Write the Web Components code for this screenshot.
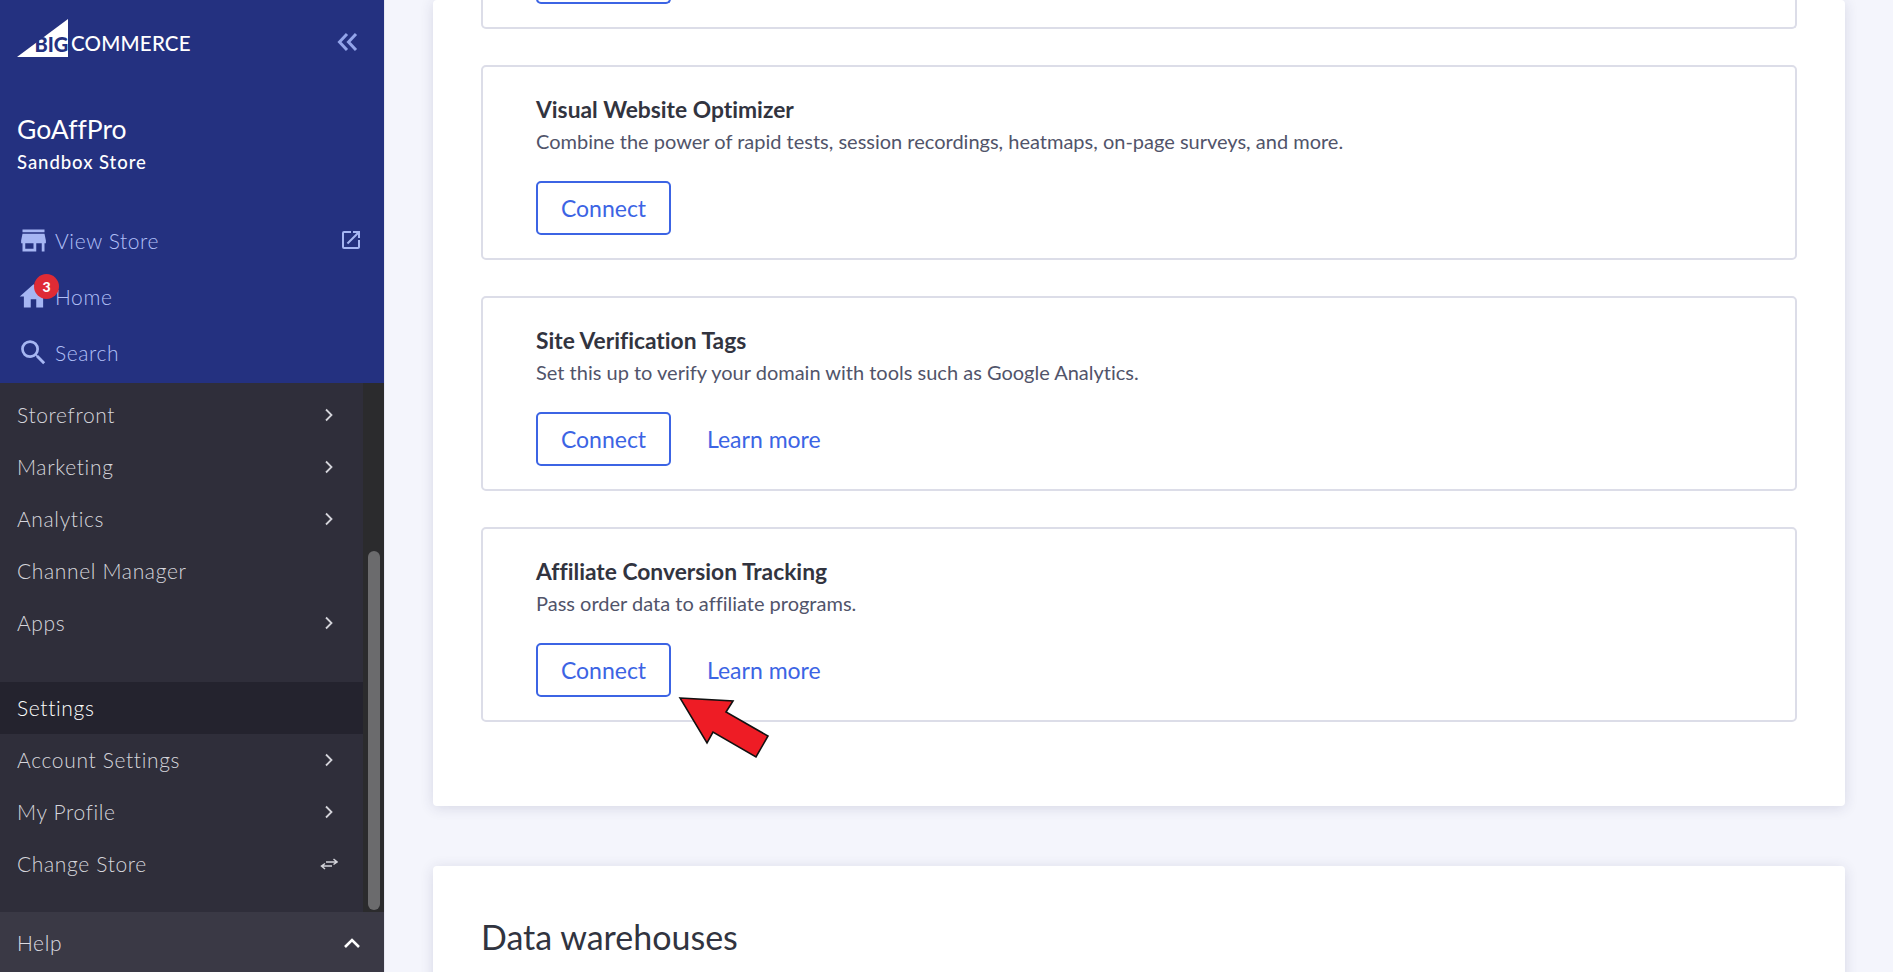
<!DOCTYPE html>
<html lang="en">
<head>
<meta charset="utf-8">
<title>BigCommerce - Data solutions</title>
<style>
  html, body { margin: 0; height: 100%; overflow: hidden; }
  body { font-family: "Lato", "Noto Sans", sans-serif; background: #f4f5fc; font-variant-ligatures: none; }
  bc-app { height: 972px; }
</style>
</head>
<body>
<bc-app>
  <bc-sidebar slot="side">
    <bc-quick label="View Store" icon="store" external></bc-quick>
    <bc-quick label="Home" icon="home" badge="3"></bc-quick>
    <bc-quick label="Search" icon="search"></bc-quick>
    <bc-nav slot="nav" label="Storefront" arrow="right"></bc-nav>
    <bc-nav slot="nav" label="Marketing" arrow="right"></bc-nav>
    <bc-nav slot="nav" label="Analytics" arrow="right"></bc-nav>
    <bc-nav slot="nav" label="Channel Manager"></bc-nav>
    <bc-nav slot="nav" label="Apps" arrow="right"></bc-nav>
    <bc-nav slot="nav2" label="Settings" active></bc-nav>
    <bc-nav slot="nav2" label="Account Settings" arrow="right"></bc-nav>
    <bc-nav slot="nav2" label="My Profile" arrow="right"></bc-nav>
    <bc-nav slot="nav2" label="Change Store" arrow="swap"></bc-nav>
  </bc-sidebar>
  <bc-panel>
    <bc-tool cut></bc-tool>
    <bc-tool name="Visual Website Optimizer" text="Combine the power of rapid tests, session recordings, heatmaps, on-page surveys, and more."></bc-tool>
    <bc-tool name="Site Verification Tags" text="Set this up to verify your domain with tools such as Google Analytics." more></bc-tool>
    <bc-tool name="Affiliate Conversion Tracking" text="Pass order data to affiliate programs." more></bc-tool>
  </bc-panel>
  <bc-panel heading="Data warehouses"></bc-panel>
</bc-app>

<script>
const ICONS = {
	store: "M20 4H4v2h16V4zm1 10v-2l-1-5H4l-1 5v2h1v6h10v-6h4v6h2v-6h1zm-9 4H6v-4h6v4z",
	home: "M10 20v-6h4v6h5v-8h3L12 3 2 12h3v8z",
	search: "M15.5 14h-.79l-.28-.27A6.471 6.471 0 0 0 16 9.5 6.5 6.5 0 1 0 9.5 16c1.61 0 3.09-.59 4.23-1.57l.27.28v.79l5 4.99L20.49 19l-4.99-5zm-6 0C7.01 14 5 11.99 5 9.5S7.01 5 9.5 5 14 7.01 14 9.5 11.99 14 9.5 14z",
	external: "M19 19H5V5h7V3H5a2 2 0 0 0-2 2v14a2 2 0 0 0 2 2h14c1.1 0 2-.9 2-2v-7h-2v7zM14 3v2h3.59l-9.83 9.83 1.41 1.41L19 6.41V10h2V3h-7z",
};

class BcApp extends HTMLElement {
	constructor() {
		super();
		this.attachShadow({ mode: "open" });
		this.shadowRoot.innerHTML = `
    <style>
    :host {
      display: grid;
      grid-template-columns: 385px 1fr;
      overflow: hidden;
      position: relative;
    }
    main {
      padding: 0 48px 0 48px;
      display: flex;
      flex-direction: column;
      gap: 60px;
    }
    svg {
      position: absolute;
      left: 676px;
      top: 694px;
    }
    </style>
    <slot name="side"></slot>
    <main><slot></slot></main>
    <svg width="96" height="68" viewBox="676 694 96 68">
      <path d="M680 698 733 701 726 712 768 736 756 757 713 732 707 743Z" fill="#ee1c25" stroke="#111" stroke-width="1.6" stroke-linejoin="miter"/>
    </svg>
    `;
	}
}
customElements.define("bc-app", BcApp);

class BcSidebar extends HTMLElement {
	constructor() {
		super();
		this.attachShadow({ mode: "open" });
		this.shadowRoot.innerHTML = `
    <style>
    :host {
      display: flex;
      flex-direction: column;
      height: 972px;
      background: #2f2e3a;
      border-right: 1px solid #e7e8f2;
      box-sizing: border-box;
      width: 385px;
    }
    header {
      background: #243180;
      height: 383px;
      flex: none;
      box-sizing: border-box;
      padding: 19px 0 0 17px;
      color: #fff;
    }
    .top {
      display: flex;
      justify-content: space-between;
      align-items: flex-start;
      padding-right: 24px;
      height: 38px;
    }
    .store {
      margin-top: 54px;
      font-size: 26.5px;
      line-height: 36px;
    }
    .sub {
      margin-top: 2px;
      font-size: 18.500px;
      font-weight: 500;
      line-height: 26px;
      letter-spacing: 0.95px;
    }
    .quick {
      margin-top: 37px;
      margin-left: -17px;
    }
    .body {
      flex: 1;
      display: flex;
      min-height: 0;
    }
    nav {
      flex: 1;
      padding-top: 6px;
      display: flex;
      flex-direction: column;
    }
    .group2 { margin-top: 33px; }
    .track {
      width: 21px;
      background: #2b2b2d;
      flex: none;
      padding: 168px 4px 2px 5px;
      box-sizing: border-box;
    }
    .thumb {
      height: 100%;
      background: #6b6b6d;
      border-radius: 6px;
    }
    .help {
      height: 60px;
      flex: none;
      background: #3a3945;
      display: flex;
      align-items: center;
      justify-content: space-between;
      padding: 1px 23px 0 17px;
      box-sizing: border-box;
      font-size: 21px;
      font-weight: 300;
      letter-spacing: 0.6px;
      color: #dcdce2;
    }
    </style>
    <header>
      <div class="top">
        <svg width="180" height="38" viewBox="17 19 180 38">
          <path d="M17 57 68 19V57Z" fill="#fff"/>
          <text x="34.5" y="51.500" font-family="Lato, sans-serif" font-size="20" font-weight="900" fill="#243180">BIG</text>
          <text x="71" y="51" font-family="Lato, sans-serif" font-size="20.500" font-weight="500" fill="#fff" letter-spacing=".2">COMMERCE</text>
        </svg>
        <svg width="24" height="24" viewBox="0 0 24 24" style="margin-top:11px" fill="none" stroke="#93a5ea" stroke-width="3">
          <path d="M11 4 3.500 12 11 20M20 4 12.500 12 20 20"/>
        </svg>
      </div>
      <div class="store">GoAffPro</div>
      <div class="sub">Sandbox Store</div>
      <div class="quick"><slot></slot></div>
    </header>
    <div class="body">
      <nav>
        <div><slot name="nav"></slot></div>
        <div class="group2"><slot name="nav2"></slot></div>
      </nav>
      <div class="track"><div class="thumb"></div></div>
    </div>
    <div class="help">
      <span>Help</span>
      <svg width="18" height="12" viewBox="0 0 18 12" fill="none" stroke="#fff" stroke-width="2.600"><path d="M2 10 9 3 16 10"/></svg>
    </div>
    `;
	}
}
customElements.define("bc-sidebar", BcSidebar);

class BcQuick extends HTMLElement {
	constructor() {
		super();
		this.attachShadow({ mode: "open" });
		const name = this.getAttribute("icon");
		const badge = this.getAttribute("badge");
		this.shadowRoot.innerHTML = `
    <style>
    :host {
      display: flex;
      align-items: center;
      height: 56px;
      padding: 0 21px 0 17px;
      color: #b2c0f8;
      font-size: 21px;
      font-weight: 300;
      letter-spacing: 0.6px;
    }
    .icon {
      position: relative;
      width: 38px;
      height: 32px;
      flex: none;
    }
    .icon svg {
      display: block;
      fill: #a6b6f3;
    }
    b {
      position: absolute;
      left: 17px;
      top: -6px;
      width: 25px;
      height: 25px;
      border-radius: 50%;
      background: #df2b35;
      color: #fff;
      font-size: 14px;
      font-weight: 900;
      line-height: 25px;
      text-align: center;
      letter-spacing: 0;
    }
    span { flex: 1; }
    </style>
    <div class="icon">
      <svg width="33" height="33" viewBox="0 0 24 24"><path d="${ICONS[name]}"/></svg>
      ${badge ? `<b>${badge}</b>` : ""}
    </div>
    <span>${this.getAttribute("label")}</span>
    ${this.hasAttribute("external") ? `<svg width="24" height="24" viewBox="0 0 24 24" fill="#a6b6f3"><path d="${ICONS.external}"/></svg>` : ""}
    `;
	}
}
customElements.define("bc-quick", BcQuick);

class BcNav extends HTMLElement {
	constructor() {
		super();
		this.attachShadow({ mode: "open" });
		const arrow = this.getAttribute("arrow");
		let icon = "";
		if (arrow === "right") {
			icon = `<svg width="12" height="14" viewBox="0 0 12 14" fill="none" stroke="#d4d4da" stroke-width="1.800"><path d="M3 1.500 8.500 7 3 12.500"/></svg>`;
		}
		if (arrow === "swap") {
			icon = `<svg width="18" height="14" viewBox="0 0 18 14" fill="none" stroke="#d4d4da" stroke-width="1.500" style="margin-right:-3px"><path d="M6 5H17M13.500 2 17 5 13.500 7.500M12 9H1.500M5 6.500 1.500 9 5 12"/></svg>`;
		}
		this.shadowRoot.innerHTML = `
    <style>
    :host {
      display: flex;
      align-items: center;
      justify-content: space-between;
      height: 52px;
      padding: 0 28px 0 17px;
      color: #d6d6dc;
      font-size: 21px;
      font-weight: 300;
      letter-spacing: 0.65px;
    }
    :host([active]) {
      background: #24232e;
      color: #fff;
    }
    span { margin-top: -1px; }
    </style>
    <span>${this.getAttribute("label")}</span>
    ${icon}
    `;
	}
}
customElements.define("bc-nav", BcNav);

class BcPanel extends HTMLElement {
	constructor() {
		super();
		this.attachShadow({ mode: "open" });
		const heading = this.getAttribute("heading");
		this.shadowRoot.innerHTML = `
    <style>
    :host {
      display: flex;
      flex-direction: column;
      gap: 36px;
      background: #fff;
      border-radius: 4px;
      box-shadow: 0 2px 14px rgba(40, 45, 90, 0.14);
      padding: 0 48px 84px;
    }
    h2 {
      margin: 0;
      font-size: 34px;
      font-weight: 400;
      color: #313440;
      line-height: 44px;
      padding-top: 49px;
    }
    :host([heading]) { padding-bottom: 200px; }
    </style>
    ${heading ? `<h2>${heading}</h2>` : ""}
    <slot></slot>
    `;
	}
}
customElements.define("bc-panel", BcPanel);

class BcTool extends HTMLElement {
	constructor() {
		super();
		this.attachShadow({ mode: "open" });
		const name = this.getAttribute("name") || "";
		const text = this.getAttribute("text") || "";
		this.shadowRoot.innerHTML = `
    <style>
    :host {
      display: block;
      box-sizing: border-box;
      height: 195px;
      border: 2px solid #dcdde8;
      border-radius: 5px;
      padding: 27px 54px 0 53px;
    }
    /* card scrolled past the top of the page */
    :host([cut]) {
      height: 33px;
      margin-top: -4px;
      padding-top: 0;
      border-top: none;
      border-radius: 0 0 5px 5px;
    }
    .cutbtn {
      width: 135px;
      height: 8px;
      border: 2px solid #3c64e4;
      border-top: none;
      border-radius: 0 0 5px 5px;
      box-sizing: border-box;
    }
    h3 {
      margin: 0;
      font-size: 22.8px;
      line-height: 30px;
      font-weight: 700;
      color: #32343f;
    }
    p {
      margin: 3px 0 0;
      font-size: 20px;
      line-height: 28px;
      color: #51546a;
    }
    .actions {
      display: flex;
      align-items: center;
      gap: 36px;
      margin-top: 26px;
    }
    button {
      width: 135px;
      height: 54px;
      box-sizing: border-box;
      background: #fff;
      border: 2px solid #3c64e4;
      border-radius: 5px;
      font: inherit;
      font-size: 23px;
      color: #3c64e4;
      padding: 0;
    }
    a {
      font-size: 23px;
      color: #3c64e4;
      text-decoration: none;
    }
    </style>
    ${this.hasAttribute("cut") ? `<div class="cutbtn"></div>` : `
    <h3>${name}</h3>
    <p>${text}</p>
    <div class="actions">
      <button>Connect</button>
      ${this.hasAttribute("more") ? `<a href="#">Learn more</a>` : ""}
    </div>`}
    `;
	}
}
customElements.define("bc-tool", BcTool);
</script>
</body>
</html>
